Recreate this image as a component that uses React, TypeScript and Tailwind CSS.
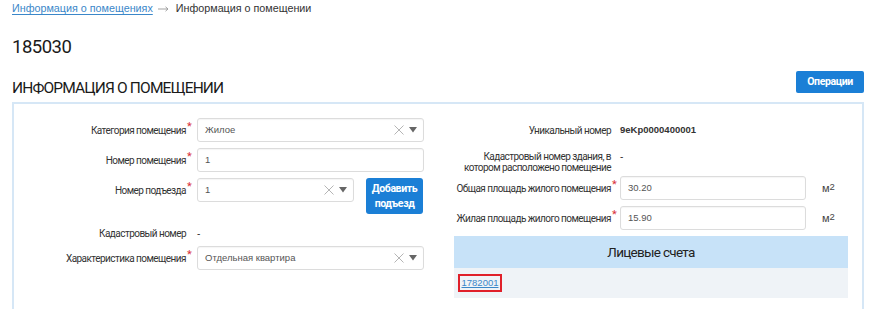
import React from "react";

const cond = "font-['Roboto',sans-serif]";
const arial = "font-['Liberation_Sans','Arial',sans-serif]";

function Req() {
  return (
    <span className="absolute left-full top-[-4px] ml-[1px] text-[11px] leading-none tracking-normal text-[#d9303a]">*</span>
  );
}

function Label({ text, req, width }: { text: string; req?: boolean; width: string }) {
  return (
    <div className={`${width} shrink-0 text-right text-[10px] tracking-[-0.55px] leading-[11px] text-[#333] ${cond}`}>
      <span className="relative">
        {text}
        {req && <Req />}
      </span>
    </div>
  );
}

function SelectBox({ value, width }: { value: string; width: string }) {
  return (
    <div
      className={`${width} h-[24px] flex items-center rounded-[3px] border border-[#dcdcdc] bg-white pl-[7px] pr-[6px] shadow-[inset_0_1px_1px_rgba(0,0,0,0.04)]`}
    >
      <span className={`flex-1 text-[9.5px] text-[#555] ${arial}`}>{value}</span>
      <svg width="10" height="10" viewBox="0 0 10 10" className="mr-[5px]">
        <path d="M0.5 0.5 L9.5 9.5 M9.5 0.5 L0.5 9.5" stroke="#b5b5b5" strokeWidth="1" fill="none" />
      </svg>
      <svg width="8" height="6" viewBox="0 0 8 6">
        <path d="M0 0 L8 0 L4 5.5 Z" fill="#666" />
      </svg>
    </div>
  );
}

function InputBox({ value, width }: { value: string; width: string }) {
  return (
    <div
      className={`${width} h-[24px] flex items-center rounded-[3px] border border-[#dcdcdc] bg-white pl-[7px] shadow-[inset_0_1px_1px_rgba(0,0,0,0.04)]`}
    >
      <span className={`text-[9.5px] text-[#555] ${arial}`}>{value}</span>
    </div>
  );
}

function M2() {
  return (
    <span className={`ml-[16px] text-[11px] text-[#444] ${arial}`}>
      м<sup className="text-[9.5px] relative -top-[2px]">2</sup>
    </span>
  );
}

export default function App() {
  return (
    <div className="w-[876px] h-[317px] bg-white px-3 overflow-hidden">
      {/* breadcrumb */}
      <div className={`h-[16px] flex items-center text-[10.75px] ${arial} pt-[1px]`}>
        <a className="text-[#3b87c9] underline underline-offset-2 decoration-[#3b87c9]">Информация о помещениях</a>
        <svg width="11" height="6" viewBox="0 0 11 6" className="ml-[5px] mr-[7px] mt-[1px]">
          <path d="M0 3 H10 M7.5 0.8 L10 3 L7.5 5.2" stroke="#999" strokeWidth="0.9" fill="none" />
        </svg>
        <span className="text-[#333]">Информация о помещении</span>
      </div>

      <div className={`mt-[19px] h-[24px] leading-[24px] text-[18.5px] tracking-[-0.5px] text-[#1a1a1a] ${cond}`}>185030</div>

      <div className="mt-[12px] flex items-start justify-between">
        <div className={`mt-[7px] leading-[20px] text-[15.5px] tracking-[-0.85px] text-[#1a1a1a] ${cond}`}>ИНФОРМАЦИЯ О ПОМЕЩЕНИИ</div>
        <button
          className={`h-[22px] w-[68px] rounded-[2px] bg-[#1b7fd6] text-white text-[10.5px] tracking-[-0.4px] font-bold ${cond}`}
        >
          Операции
        </button>
      </div>

      {/* panel */}
      <div className="mt-[4px] border-2 border-b-0 border-[#d6e7f6] flex">
        {/* left column */}
        <div className="w-[426px] pt-[14px] flex flex-col">
          <div className="flex items-center">
            <Label text="Категория помещения" req width="w-[172px]" />
            <div className="ml-[11px]">
              <SelectBox value="Жилое" width="w-[227px]" />
            </div>
          </div>
          <div className="mt-[6px] flex items-center">
            <Label text="Номер помещения" req width="w-[172px]" />
            <div className="ml-[11px]">
              <InputBox value="1" width="w-[227px]" />
            </div>
          </div>
          <div className="mt-[6px] flex items-start">
            <div className="h-[24px] flex items-center">
              <Label text="Номер подъезда" req width="w-[172px]" />
            </div>
            <div className="ml-[11px]">
              <SelectBox value="1" width="w-[157px]" />
            </div>
            <button
              className={`ml-[12px] h-[36px] w-[57px] rounded-[3px] bg-[#1b7fd6] text-white text-[10.5px] tracking-[-0.4px] leading-[15px] font-bold ${cond}`}
            >
              Добавить
              <br />
              подъезд
            </button>
          </div>
          <div className="mt-[10px] h-[18px] flex items-center">
            <Label text="Кадастровый номер" width="w-[172px]" />
            <span className={`ml-[11px] text-[10px] text-[#333] ${arial}`}>-</span>
          </div>
          <div className="mt-[4px] flex items-center">
            <Label text="Характеристика помещения" req width="w-[172px]" />
            <div className="ml-[11px]">
              <SelectBox value="Отдельная квартира" width="w-[227px]" />
            </div>
          </div>
        </div>

        {/* right column */}
        <div className="ml-[14px] w-[394px] pt-[17px] pb-[11px] flex flex-col">
          <div className="h-[18px] flex items-center">
            <Label text="Уникальный номер" width="w-[157px]" />
            <span className={`ml-[9px] text-[9.5px] font-bold text-[#333] ${arial}`}>9eKp0000400001</span>
          </div>
          <div className="mt-[12px] h-[22px] flex items-start">
            <Label text="Кадастровый номер здания, в котором расположено помещение" width="w-[157px]" />
            <span className={`ml-[9px] text-[10px] leading-[11px] text-[#333] ${arial}`}>-</span>
          </div>
          <div className="mt-[3px] flex items-center">
            <Label text="Общая площадь жилого помещения" req width="w-[157px]" />
            <div className="ml-[9px]">
              <InputBox value="30.20" width="w-[186px]" />
            </div>
            <M2 />
          </div>
          <div className="mt-[6px] flex items-center">
            <Label text="Жилая площадь жилого помещения" req width="w-[157px]" />
            <div className="ml-[9px]">
              <InputBox value="15.90" width="w-[186px]" />
            </div>
            <M2 />
          </div>
          <div className={`mt-[6px] h-[32px] bg-[#c7e2f8] flex items-center justify-center text-[13.5px] tracking-[-0.7px] text-[#222] ${cond}`}>
            Лицевые счета
          </div>
          <div className="h-[30px] bg-[#eff3f7] flex items-center pl-[4px]">
            <div className="h-[18px] w-[44px] border-2 border-[#e0202a] flex items-center justify-center">
              <a className={`text-[9.5px] text-[#3b87c9] underline ${arial}`}>1782001</a>
            </div>
          </div>
        </div>
      </div>
    </div>
  );
}
